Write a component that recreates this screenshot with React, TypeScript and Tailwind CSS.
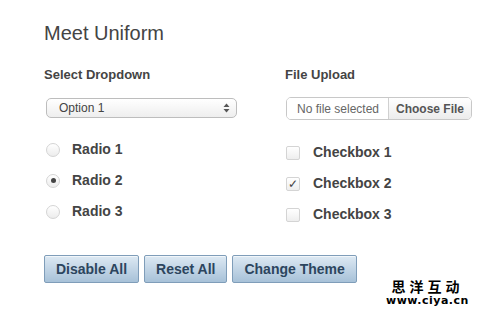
import React, { useState } from 'react';

const font = { fontFamily: '"Liberation Sans", Arial, sans-serif' };

const Radio: React.FC<{ label: string; checked?: boolean; onSelect: () => void }> = ({ label, checked, onSelect }) => (
  <button onClick={onSelect} className="flex h-[31px] items-center text-left">
    <span className="flex h-[14px] w-[14px] items-center justify-center rounded-full border border-[#d4d4d4] bg-gradient-to-b from-white to-[#ececec]">
      {checked && <span className="h-[5px] w-[5px] rounded-full bg-[#444]" />}
    </span>
    <span className="ml-[12px] text-[14px] font-bold text-[#444]">{label}</span>
  </button>
);

const Checkbox: React.FC<{ label: string; checked?: boolean; onToggle: () => void }> = ({ label, checked, onToggle }) => (
  <button onClick={onToggle} className="flex h-[31px] items-center text-left">
    <span className="flex h-[14px] w-[14px] items-center justify-center rounded-[2px] border border-[#d4d4d4] bg-gradient-to-b from-white to-[#eeeeee] text-[12px] leading-none text-[#444]">
      {checked && '✓'}
    </span>
    <span className="ml-[13px] text-[14px] font-bold text-[#444]">{label}</span>
  </button>
);

const Btn: React.FC<{ children: React.ReactNode }> = ({ children }) => (
  <button className="h-[28px] rounded-[2px] border border-[#7f9db9] bg-gradient-to-b from-[#dde9f3] to-[#a7c1d8] px-[11px] text-[14px] font-bold text-[#2c455e] shadow-[inset_0_1px_0_rgba(255,255,255,0.6)]">
    {children}
  </button>
);

export default function App() {
  const [radio, setRadio] = useState(2);
  const [checks, setChecks] = useState([false, true, false]);
  const toggle = (i: number) => setChecks(c => c.map((v, j) => (j === i ? !v : v)));

  return (
    <div className="relative h-[314px] w-[495px] bg-white pl-[44px] pt-[23px]" style={font}>
      <h1 className="text-[20px] leading-none font-normal text-[#444]">Meet Uniform</h1>

      <div className="mt-[24px] flex gap-[49px]">
        <div className="w-[192px]">
          <h3 className="text-[13px] leading-[16px] font-bold text-[#444]">Select Dropdown</h3>
          <div className="ml-[2px] mt-[15px] flex h-[20px] w-[191px] items-center justify-between rounded-[5px] border border-[#bdbdbd] bg-gradient-to-b from-white to-[#eeeeee] pl-[12px] pr-[6px] text-[12px] text-[#444]">
            <span>Option 1</span>
            <svg width="7" height="10" viewBox="0 0 7 10">
              <path d="M3.5 0.5 L6.5 4 L0.5 4 Z" fill="#555" />
              <path d="M3.5 9.5 L6.5 6 L0.5 6 Z" fill="#555" />
            </svg>
          </div>
          <div className="mt-[16px] ml-[2px] flex flex-col">
            <Radio label="Radio 1" checked={radio === 1} onSelect={() => setRadio(1)} />
            <Radio label="Radio 2" checked={radio === 2} onSelect={() => setRadio(2)} />
            <Radio label="Radio 3" checked={radio === 3} onSelect={() => setRadio(3)} />
          </div>
        </div>

        <div className="w-[188px]">
          <h3 className="text-[13px] leading-[16px] font-bold text-[#444]">File Upload</h3>
          <div className="ml-[1px] mt-[14px] flex h-[23px] w-[186px] overflow-hidden rounded-[5px] border border-[#c8c8c8] text-[12px]">
            <div className="flex w-[102px] items-center border-r border-[#d0d0d0] bg-white pl-[10px] text-[#666]">No file selected</div>
            <div className="flex flex-1 items-center justify-center bg-gradient-to-b from-white to-[#ececec] font-bold text-[#555]">Choose File</div>
          </div>
          <div className="mt-[17px] ml-[1px] flex flex-col">
            <Checkbox label="Checkbox 1" checked={checks[0]} onToggle={() => toggle(0)} />
            <Checkbox label="Checkbox 2" checked={checks[1]} onToggle={() => toggle(1)} />
            <Checkbox label="Checkbox 3" checked={checks[2]} onToggle={() => toggle(2)} />
          </div>
        </div>
      </div>

      <div className="mt-[25px] flex gap-[5px]">
        <Btn>Disable All</Btn>
        <Btn>Reset All</Btn>
        <Btn>Change Theme</Btn>
      </div>

      <div className="absolute left-[386px] top-[278px] flex flex-col items-center text-black [text-shadow:1px_0_0_#fff,-1px_0_0_#fff,0_1px_0_#fff,0_-1px_0_#fff]">
        <span className="text-[14px] leading-[16px] font-bold tracking-[4px]" style={{ fontFamily: '"Noto Sans CJK SC", sans-serif' }}>思洋互动</span>
        <span className="mt-[1px] text-[11px] leading-[11px] font-bold tracking-[0.5px]" style={{ fontFamily: '"DejaVu Sans", sans-serif' }}>www.ciya.cn</span>
      </div>
    </div>
  );
}
